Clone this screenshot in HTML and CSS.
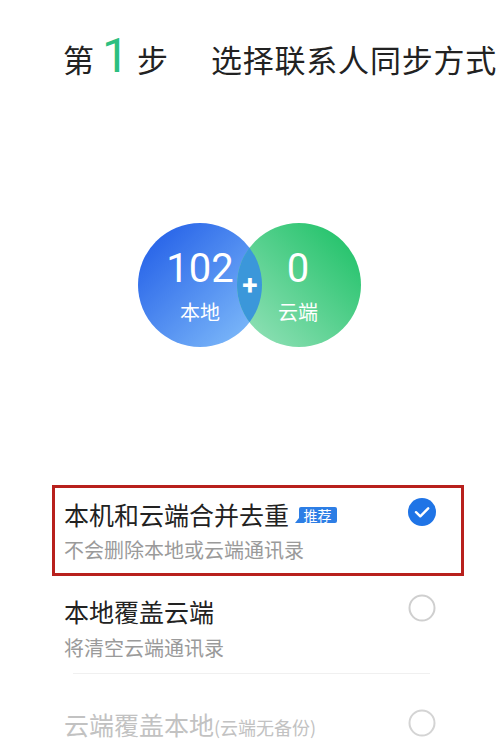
FILE: index.html
```html
<!DOCTYPE html>
<html lang="zh-CN">
  <head>
    <meta charset="UTF-8" />
    <meta name="viewport" content="width=device-width, initial-scale=1.0" />
    <title>同步联系人</title>
    <link rel="stylesheet" href="styles.css">
  </head>
  <body>
    <div class="header">
      <span class="step">第 <span class="step-num">1</span> 步</span>
      <span class="step-title">选择联系人同步方式</span>
    </div>

    <div class="summary">
      <svg class="venn" width="226" height="126" viewBox="0 0 226 126">
        <defs>
          <linearGradient id="blueGrad" x1="0" y1="0" x2="1" y2="1">
            <stop offset="0" stop-color="#1c58e6" />
            <stop offset="1" stop-color="#86c2fb" />
          </linearGradient>
          <linearGradient id="greenGrad" x1="1" y1="0" x2="0" y2="1">
            <stop offset="0" stop-color="#17bf62" />
            <stop offset="1" stop-color="#9ae3bd" />
          </linearGradient>
          <clipPath id="leftClip">
            <circle cx="63" cy="63" r="62" />
          </clipPath>
        </defs>
        <circle cx="63" cy="63" r="62" fill="url(#blueGrad)" />
        <circle cx="162" cy="63" r="62" fill="url(#greenGrad)" />
        <circle cx="162" cy="63" r="62" fill="#3b97da" clip-path="url(#leftClip)" />
      </svg>
      <div class="count count-local">
        <div class="count-num">102</div>
        <div class="count-label">本地</div>
      </div>
      <div class="plus">+</div>
      <div class="count count-cloud">
        <div class="count-num">0</div>
        <div class="count-label">云端</div>
      </div>
    </div>

    <ul class="options">
      <li class="option selected">
        <div class="option-text">
          <div class="option-title">本机和云端合并去重 <span class="badge">推荐</span></div>
          <div class="option-desc">不会删除本地或云端通讯录</div>
        </div>
        <svg class="radio" width="28" height="28" viewBox="0 0 28 28">
          <circle cx="14" cy="14" r="14" fill="#1f74e6" />
          <path d="M8 14.2 L12.3 18.3 L20.2 10.3" fill="none" stroke="#fff" stroke-width="2.4" stroke-linecap="round" stroke-linejoin="round" />
        </svg>
      </li>
      <li class="option">
        <div class="option-text">
          <div class="option-title">本地覆盖云端</div>
          <div class="option-desc">将清空云端通讯录</div>
        </div>
        <svg class="radio" width="28" height="28" viewBox="0 0 28 28">
          <circle cx="14" cy="14" r="12.5" fill="none" stroke="#cfcfcf" stroke-width="2" />
        </svg>
      </li>
      <li class="option disabled">
        <div class="option-text">
          <div class="option-title">云端覆盖本地<span class="note">(云端无备份)</span></div>
        </div>
        <svg class="radio" width="28" height="28" viewBox="0 0 28 28">
          <circle cx="14" cy="14" r="12.5" fill="none" stroke="#d4d4d4" stroke-width="2" />
        </svg>
      </li>
    </ul>
  </body>
</html>
```

FILE: styles.css
```css
body {
  margin: 0;
  padding: 0;
  width: 500px;
  height: 753px;
  overflow: hidden;
  background-color: #fff;
  font-family: "Noto Sans CJK SC", "Noto Sans", sans-serif;
  color: #222;
}

.header {
  display: flex;
  align-items: baseline;
  padding: 25px 0 0 63px;
  height: 65px;
  white-space: nowrap;
  font-size: 31px;
  line-height: 62px;
}

.step {
  margin-right: 43px;
  word-spacing: 1px;
}

.step-num {
  color: #2cbf80;
  font-family: Roboto, sans-serif;
  font-size: 48px;
  font-weight: 400;
}

.step-title {
  letter-spacing: 0.8px;
}

/* circles */
.summary {
  position: relative;
  width: 226px;
  height: 126px;
  margin: 132px auto 0;
  color: #fff;
}

.venn {
  display: block;
}

.count {
  position: absolute;
  top: 24px;
  width: 110px;
  text-align: center;
}

.count-local {
  left: 8px;
}

.count-cloud {
  left: 106px;
}

.count-num {
  font-family: Roboto, sans-serif;
  font-size: 40px;
  line-height: 46px;
}

.count-label {
  font-size: 20px;
  line-height: 28px;
  margin-top: 6px;
}

.plus {
  position: absolute;
  left: 100px;
  top: 48px;
  width: 26px;
  text-align: center;
  font-family: Roboto, sans-serif;
  font-weight: 700;
  font-size: 28px;
  line-height: 32px;
}

/* options */
.options {
  list-style: none;
  margin: 0;
  padding: 0;
  margin-top: 137px;
}

.option {
  position: relative;
  display: flex;
  align-items: flex-start;
  justify-content: space-between;
  margin: 0 36px 0 52px;
  padding-left: 12px;
  padding-right: 28px;
}

.option.selected {
  border: 3px solid #b8201d;
  padding-left: 9px;
  padding-right: 25px;
  height: 85px;
}

.option-title {
  font-size: 25px;
  line-height: 34px;
  margin-top: 9px;
}

.option-desc {
  font-size: 20px;
  line-height: 26px;
  margin-top: 6px;
  color: #9a9a9a;
}

.badge {
  position: relative;
  display: inline-block;
  vertical-align: 4px;
  margin-left: 4px;
  padding: 0 5px;
  background-color: #2d7ee5;
  color: #fff;
  font-size: 14px;
  line-height: 16px;
  border-radius: 2px 2px 2px 0;
}

.badge::before {
  content: "";
  position: absolute;
  left: -4px;
  bottom: 0;
  border-right: 4px solid #2d7ee5;
  border-top: 5px solid transparent;
}

.radio {
  margin-top: 10px;
  flex-shrink: 0;
}

.option:nth-child(2) {
  height: 98px;
}

.option:nth-child(2)::after {
  content: "";
  position: absolute;
  left: 21px;
  right: 34px;
  bottom: 0;
  border-bottom: 1px solid #f0f0f0;
}

.option:nth-child(2) .option-title {
  margin-top: 18px;
}

.option:nth-child(2) .option-desc {
  margin-top: 7px;
}

.option:nth-child(2) .radio {
  margin-top: 18px;
}

.option.disabled {
  padding-top: 33px;
}

.option.disabled .option-title {
  margin-top: 0;
  color: #c2c2c2;
}

.option.disabled .radio {
  margin-top: 2px;
}

.note {
  font-size: 18px;
}
```
